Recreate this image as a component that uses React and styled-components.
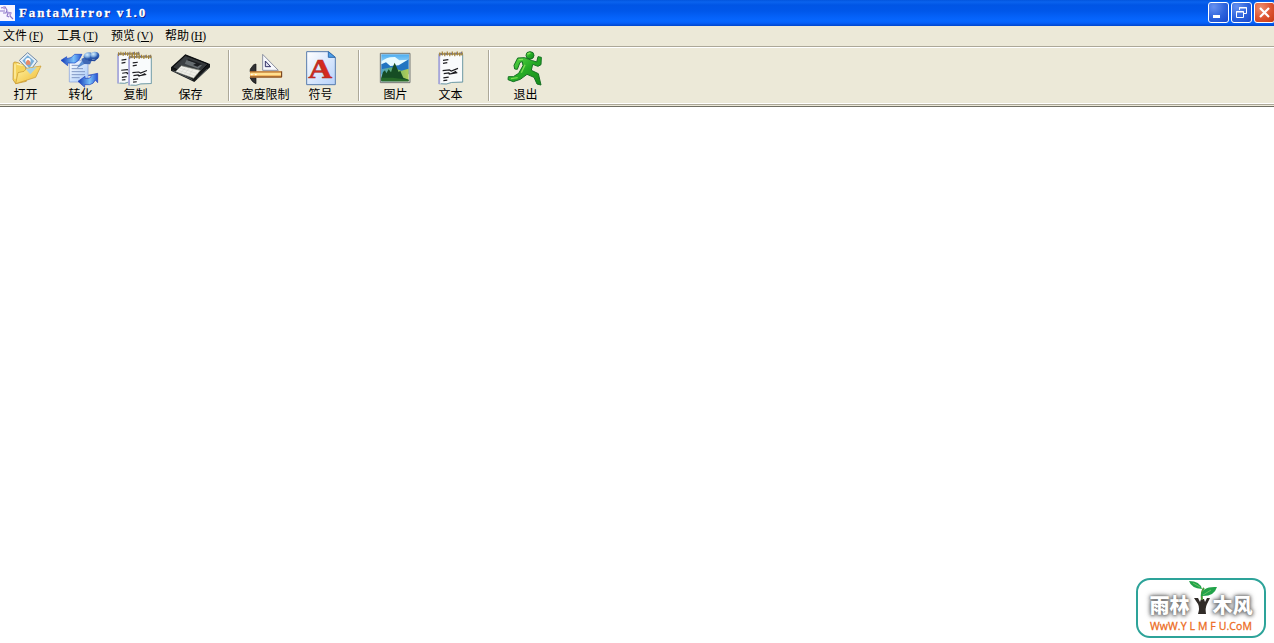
import React from 'react';
import styled, { createGlobalStyle } from 'styled-components';

const Global = createGlobalStyle`
  * { box-sizing: border-box; }
  html, body { margin: 0; padding: 0; overflow: hidden; background: #fff; }
  svg { display: block; overflow: visible; }
`;

const Window = styled.div`
  display: flex;
  flex-direction: column;
  width: 100%;
  height: 643px;
  overflow: hidden;
  background: #fff;
  color: #000;
  font: 12px/16px "Liberation Sans", "Noto Sans CJK SC", sans-serif;
`;

const TitleBar = styled.header`
  display: flex;
  align-items: center;
  flex: none;
  height: 26px;
  background: linear-gradient(#0355dd 0, #0a63ee 2px, #0055e5 5px, #0057ea 11px, #0563fb 18px, #0667ff 21px, #0660f8 23px, #0046cc 26px);
`;

const Title = styled.h1`
  flex: 1;
  margin: 0 0 0 4px;
  color: #fff;
  font: bold 13px/26px "Liberation Serif", serif;
  letter-spacing: 1.9px;
  text-shadow: 1px 1px #0a1883;
  -webkit-text-stroke: 0.3px #fff;
`;

const WindowButtons = styled.div`
  display: flex;
  flex: none;
  gap: 2px;
  height: 26px;
  margin-right: -1px;
  padding-top: 2px;
`;

const WindowButton = styled.button`
  width: 21px;
  height: 21px;
  padding: 0;
  border: 1px solid #fff;
  border-radius: 3px;
  background: ${({ $close }) =>
    $close
      ? 'radial-gradient(circle at 30% 25%, #ec8d6e, #dd5330 55%, #c43a12)'
      : 'radial-gradient(circle at 25% 20%, #6791f0, #2c62dc 55%, #1848cc)'};
`;

const MenuBar = styled.nav`
  display: flex;
  flex: none;
  gap: 12px;
  height: 20px;
  padding: 2px 0 0 3px;
  background: #ece9d8;
`;

const MenuItem = styled.span`
  display: flex;
  width: 42px;
  height: 16px;
  white-space: nowrap;
`;

const Mnemonic = styled.span`
  margin-left: 2px;
  font: 11.5px/16px "Liberation Serif", serif;
  letter-spacing: ${({ $tight }) => ($tight ? '-0.5px' : '0')};
`;

const ToolBar = styled.div`
  display: flex;
  flex: none;
  height: 61px;
  padding: 3px 0 0;
  border-top: 1px solid #aca899;
  border-bottom: 1px solid #716f64;
  background: #ece9d8;
  box-shadow: inset 0 1px #fff, inset 0 -1px #ece9d8, inset 0 -2px #aca899, inset 0 -3px #fff;
`;

const Tool = styled.button`
  display: flex;
  flex: none;
  flex-direction: column;
  align-items: center;
  width: 55px;
  height: 52px;
  margin: 0;
  padding: 0;
  border: 0;
  background: none;
  color: inherit;
  font: inherit;
  white-space: nowrap;

  &:first-child { margin-left: -2px; }
`;

const Label = styled.span`
  height: 16px;
  line-height: 18px;
`;

const Separator = styled.i`
  flex: none;
  width: 2px;
  height: 51px;
  margin: 0 8px 0 10px;
  border-left: 1px solid #aca899;
  border-right: 1px solid #fff;
`;

const Client = styled.main`
  display: flex;
  flex: 1;
  align-items: flex-end;
  justify-content: flex-end;
  padding: 0 8px 5px;
  background: #fff;
`;

const Badge = styled.div`
  display: flex;
  flex-direction: column;
  align-items: center;
  width: 130px;
  height: 60px;
  border: 2px solid #2da399;
  border-radius: 14px;
  background: #fff;
`;

const BadgeName = styled.div`
  display: flex;
  align-items: center;
  height: 39px;
  padding-top: 11px;
  color: #fff;
  font: 900 20px/24px "Noto Sans CJK SC", sans-serif;
  text-shadow: 0 0 2px #777, 0 0 4px #777, 0 1px 4px #888, 0 0 6px #aaa;

  svg { margin: -15px -3px 0 -2px; }
`;

const BadgeUrl = styled.div`
  margin-top: -1px;
  color: #ec6b21;
  font: 10.5px/16px "Open Sans", sans-serif;
  letter-spacing: 0.1px;
  -webkit-text-stroke: 0.3px #ec6b21;
  white-space: pre;
`;

function ToolIcon({ x, children }) {
  return (
    <svg width="55" height="36" viewBox={`${x} 18 165 108`} aria-hidden="true">
      {children}
    </svg>
  );
}

function OpenIcon() {
  return (
    <ToolIcon x={-6}>
      <defs>
        <linearGradient id="folder" x2="1" y2="1">
          <stop stopColor="#fff5a8" />
          <stop offset="1" stopColor="#efb82e" />
        </linearGradient>
      </defs>
      <path d="M40 58 Q41 53 46 54 L57 57 61 61 76 60 79 112 47 119 39 107Z" fill="#f5d45d" stroke="#b98825" strokeWidth="2" />
      <path d="M83 26 112 51 89 82 58 49Z" fill="#e7f1f8" stroke="#7089a6" strokeWidth="3" />
      <path d="M83 34 103 51 88 73 67 50Z" fill="#78afd9" />
      <circle cx="84" cy="50" r="8" fill="#fff" />
      <path d="M78 62Q76 50 84 47 93 50 91 62Z" fill="#e58b69" />
      <path d="M47 119 54 86 72 82 80 73 123 66 107 100Z" fill="url(#folder)" stroke="#c7952a" strokeWidth="2" />
      <path d="M77 75 111 69 91 91Z" fill="#a8d2e5" />
      <path d="m45 61 0 43M50 60l18 4" stroke="#fff0ae" strokeWidth="4" fill="none" />
    </ToolIcon>
  );
}

function ConvertIcon() {
  return (
    <ToolIcon x={159}>
      <defs>
        <linearGradient id="arrow">
          <stop stopColor="#1238b5" />
          <stop offset=".6" stopColor="#78c0fa" />
          <stop offset="1" stopColor="#2450cf" />
        </linearGradient>
        <linearGradient id="sheet" x2="1" y2="1">
          <stop stopColor="#fff" />
          <stop offset="1" stopColor="#a5c8f8" />
        </linearGradient>
        <radialGradient id="knob" cx=".35" cy=".3">
          <stop stopColor="#d8effc" />
          <stop offset=".6" stopColor="#7facdf" />
          <stop offset="1" stopColor="#2c59ad" />
        </radialGradient>
      </defs>
      <path d="M208 50H264V114H208Z" fill="url(#sheet)" stroke="#7e9cdb" strokeWidth="2" />
      <path d="M215 64h22M215 74h34M215 83h40M215 92h40M215 101h24" stroke="#8197c4" strokeWidth="3" />
      <path d="M183 49 200 38V44Q214 44 224 31H246Q238 52 225 57H203V65Z" fill="url(#arrow)" stroke="#1744c7" strokeWidth="2" />
      <path d="M232 71 248 49 257 57Z" fill="#5c91d8" stroke="#36609f" />
      <path d="M244 45 261 35 278 44 270 61 252 60Z" fill="#4069b6" />
      <ellipse cx="266" cy="37" rx="15" ry="12" fill="url(#knob)" />
      <ellipse cx="284" cy="35" rx="14" ry="12" fill="url(#knob)" />
      <path d="M265 48 284 50 293 40" fill="none" stroke="#24499b" strokeWidth="4" />
      <path d="M234 112 255 97V103H266Q274 102 274 94H265L293 88V116L286 108Q281 120 269 122H254V130Z" fill="url(#arrow)" stroke="#233fbd" strokeWidth="2" />
    </ToolIcon>
  );
}

function NotePage({ x, y, width = 70, height = 84 }) {
  return (
    <g transform={`translate(${x} ${y}) scale(${width / 70} ${height / 84})`}>
      <path d="M2 5 69 5V79L38 80 24 84 2 84Z" fill="#f9fbfc" stroke="#99b4c4" strokeWidth="2" />
      <path d="M1 5V84H6V8" fill="#a9a5db" />
      <path d="M69 7V79L38 80 23 84 8 83" fill="none" stroke="#64949d" strokeWidth="2" />
      <path d="M4 5H70" stroke="#a59666" strokeWidth="5" />
      <path d="M5 1v10m7-12v10m7-8v10m7-12v10m7-8v10m7-12v10m7-8v10m7-12v10m7-8v10m6-12v10" stroke="#a28138" strokeWidth="3.5" />
      <path d="M9 4v4m14-5v4m14-5v4m14-5v4m14-5v4" stroke="#6569a2" strokeWidth="3" />
      <path d="M14 22 29 20M14 30 26 28M13 49 32 47 37 50 56 43M16 57 30 55 35 58 51 51M30 58 54 54M15 68 30 66M15 75 26 74" fill="none" stroke="#1c1c20" strokeWidth="3.2" />
    </g>
  );
}

function CopyIcon() {
  return (
    <ToolIcon x={9}>
      <NotePage x={36} y={24} width={68} height={94} />
      <NotePage x={69} y={33} width={71} height={91} />
    </ToolIcon>
  );
}

function SaveIcon() {
  return (
    <ToolIcon x={174}>
      <path d="M198 70 241 31 315 60 315 70 268 114 198 80Z" fill="#151819" />
      <path d="M202 70 241 34 309 60 268 102Z" fill="#34383a" stroke="#090b0d" strokeWidth="3" />
      <path d="M239 39 249 43 239 57 258 64 246 72 222 61Z" fill="#3b4043" />
      <path d="M245 47 291 64 280 74 239 59Z" fill="#666d70" />
      <path d="M250 46 290 60 277 68 264 63 273 58 247 49Z" fill="#1b1e21" />
      <path d="M229 65 286 79 266 103 211 83Z" fill="#eeeee8" stroke="#777b73" strokeWidth="2" />
      <path d="m224 72 54 17m-58-10 50 17m-28-26-16 18m27-16-16 20m28-17-15 21" stroke="#cfd0c8" strokeWidth="1.5" />
      <path d="m203 80 59 27M276 104l30-29" stroke="#4c5256" strokeWidth="3" />
    </ToolIcon>
  );
}

function WidthIcon() {
  return (
    <ToolIcon x={69}>
      <path d="M143 31V79H190Z" fill="#f7f8fc" stroke="#8c91a0" strokeWidth="3" />
      <path d="M151 51V68H167Z" fill="#dcddec" stroke="#343268" strokeWidth="3" />
      <path d="M106 75 116 62 123 60V83H105ZM105 101H123V119Q111 115 105 101Z" fill="#303133" stroke="#111" strokeWidth="2" />
      <path d="M105 82H201V101H105Z" fill="#eda448" />
      <path d="M105 84H198" stroke="#985421" strokeWidth="3" />
      <path d="M106 90H198" stroke="#ffe092" strokeWidth="8" />
      <path d="M105 99H200V82" fill="none" stroke="#67381c" strokeWidth="3" />
      <path d="M107 92h6m7 0h5" stroke="#fff" strokeWidth="3" />
    </ToolIcon>
  );
}

function SymbolIcon() {
  return (
    <ToolIcon x={234}>
      <defs>
        <linearGradient id="symbolPage" x2="1" y2="1">
          <stop stopColor="#fff" />
          <stop offset="1" stopColor="#b7d2fa" />
        </linearGradient>
      </defs>
      <path d="M275 23H341L361 41V122H275Z" fill="url(#symbolPage)" stroke="#577cae" strokeWidth="3" />
      <path d="M340 23V40H361Z" fill="#4b9fea" stroke="#316bad" strokeWidth="3" />
      <text x="280" y="101" textLength="72" lengthAdjust="spacingAndGlyphs" fontFamily="Liberation Serif, serif" fontSize="81" fontWeight="bold" fill="#d42a1e" stroke="#a92b22" strokeWidth="1.5">A</text>
    </ToolIcon>
  );
}

function PictureIcon() {
  return (
    <ToolIcon x={54}>
      <defs>
        <linearGradient id="sky" x2="0" y2="1">
          <stop stopColor="#4aacf0" />
          <stop offset=".6" stopColor="#dff8ff" />
        </linearGradient>
        <linearGradient id="meadow">
          <stop stopColor="#54a5c8" />
          <stop offset=".5" stopColor="#69b568" />
          <stop offset="1" stopColor="#b5cd58" />
        </linearGradient>
      </defs>
      <path d="M91 28H180V116H91Z" fill="#ddd" stroke="#747875" strokeWidth="3" />
      <path d="M94 31H177V112H94Z" fill="url(#sky)" />
      <path d="M95 51 110 43 120 40 135 39 148 49 176 47V70H95Z" fill="#e7fbff" />
      <path d="M94 61 108 55 121 66 146 64 176 46V91H94Z" fill="#2375c1" />
      <path d="M94 76 124 70 154 80 176 74V112H94Z" fill="url(#meadow)" />
      <path d="m94 101 5-17 6-5 4 9 7-12 7 9 5-15 6-14 6 14 6 14 5-4 4 11 5 10 16 6v5H94Z" fill="#164d24" />
      <path d="M94 101 127 101 175 107V112H94Z" fill="#276a28" />
    </ToolIcon>
  );
}

function TextIcon() {
  return (
    <ToolIcon x={219}>
      <NotePage x={264} y={24} width={75} height={96} />
    </ToolIcon>
  );
}

function ExitIcon() {
  return (
    <ToolIcon x={84}>
      <defs>
        <linearGradient id="runner" x2="1" y2="1">
          <stop stopColor="#66df4d" />
          <stop offset=".5" stopColor="#25ab25" />
          <stop offset="1" stopColor="#16891a" />
        </linearGradient>
      </defs>
      <g fill="url(#runner)" stroke="#147023" strokeWidth="3" strokeLinejoin="round">
        <path d="M132 64 143 42 164 41 188 50 200 54 204 38 214 40 213 62 204 67 188 61 184 79 205 89 213 123 201 120 192 100 171 91 151 106 130 113 114 107 115 98 130 98 146 88 159 65 157 53 150 55 142 76 134 75Z" />
        <ellipse cx="180" cy="34" rx="12" ry="11" />
      </g>
      <path d="M146 47 159 46M172 30l9-3M165 62l-11 24M123 104l20-3" stroke="#9bf065" strokeWidth="4" opacity=".7" />
    </ToolIcon>
  );
}

function Sprout() {
  return (
    <svg width="28" height="38" viewBox="0 0 28 38" aria-hidden="true">
      <path d="M6 19H10L12 23 13 20H16L17 23 19 19H22L19 25Q17 29 18 35H10Q12 29 10 25Z" fill="#302b27" />
      <path d="M14 21Q13 12 16 9" stroke="#4c9b38" strokeWidth="2" fill="none" />
      <path d="M13 17Q14 7 29 8 26 18 13 17Z" fill="#22a34a" />
      <path d="M14 10Q12 2 1 2 3 9 14 10Z" fill="#22a34a" />
      <path d="m15 16 8-5M12 8 5 4" stroke="#8ad06e" strokeWidth=".7" />
    </svg>
  );
}

const menus = [['文件', 'F'], ['工具', 'T'], ['预览', 'V'], ['帮助', 'H']];
const groups = [
  [['打开', OpenIcon], ['转化', ConvertIcon], ['复制', CopyIcon], ['保存', SaveIcon]],
  [['宽度限制', WidthIcon], ['符号', SymbolIcon]],
  [['图片', PictureIcon], ['文本', TextIcon]],
  [['退出', ExitIcon]],
];

export default function App() {
  return (
    <Window>
      <Global />
      <TitleBar>
        <svg width="15" height="16" viewBox="0 0 15 16" aria-hidden="true">
          <path d="M0 0H15V16H0Z" fill="#f8f4ff" />
          <path d="M1 3 5 2 7 5 6 8 3 8M0 6 5 6M7 7 11 8 10 11 13 14M8 8 7 11 9 12" fill="none" stroke="#8c75ca" strokeWidth="1.1" />
          <path d="m3 2 2 2M8 8l3 1" stroke="#b9a3de" strokeWidth="2" />
        </svg>
        <Title>FantaMirror v1.0</Title>
        <WindowButtons>
          <WindowButton aria-label="Minimize">
            <svg width="19" height="19"><path d="M4 12h7v3H4z" fill="#fff" /></svg>
          </WindowButton>
          <WindowButton aria-label="Restore">
            <svg width="19" height="19" fill="none" stroke="#fff">
              <path d="M7.5 7V4.5h7v6H12M7 5h8M4.5 8.5h7v6h-7zM4 9h8" />
            </svg>
          </WindowButton>
          <WindowButton $close aria-label="Close">
            <svg width="19" height="19"><path d="m5 5 9 9m0-9-9 9" stroke="#fff" strokeWidth="2.2" /></svg>
          </WindowButton>
        </WindowButtons>
      </TitleBar>
      <MenuBar>
        {menus.map(([name, key]) => (
          <MenuItem key={key}>
            {name}<Mnemonic $tight={key === 'H'}>(<u>{key}</u>)</Mnemonic>
          </MenuItem>
        ))}
      </MenuBar>
      <ToolBar>
        {groups.map((group, index) => (
          <React.Fragment key={index}>
            {index > 0 && <Separator />}
            {group.map(([label, Icon]) => (
              <Tool key={label}><Icon /><Label>{label}</Label></Tool>
            ))}
          </React.Fragment>
        ))}
      </ToolBar>
      <Client>
        <Badge>
          <BadgeName><span>雨林</span><Sprout /><span>木风</span></BadgeName>
          <BadgeUrl>WwW.Y L M F U.CoM</BadgeUrl>
        </Badge>
      </Client>
    </Window>
  );
}
